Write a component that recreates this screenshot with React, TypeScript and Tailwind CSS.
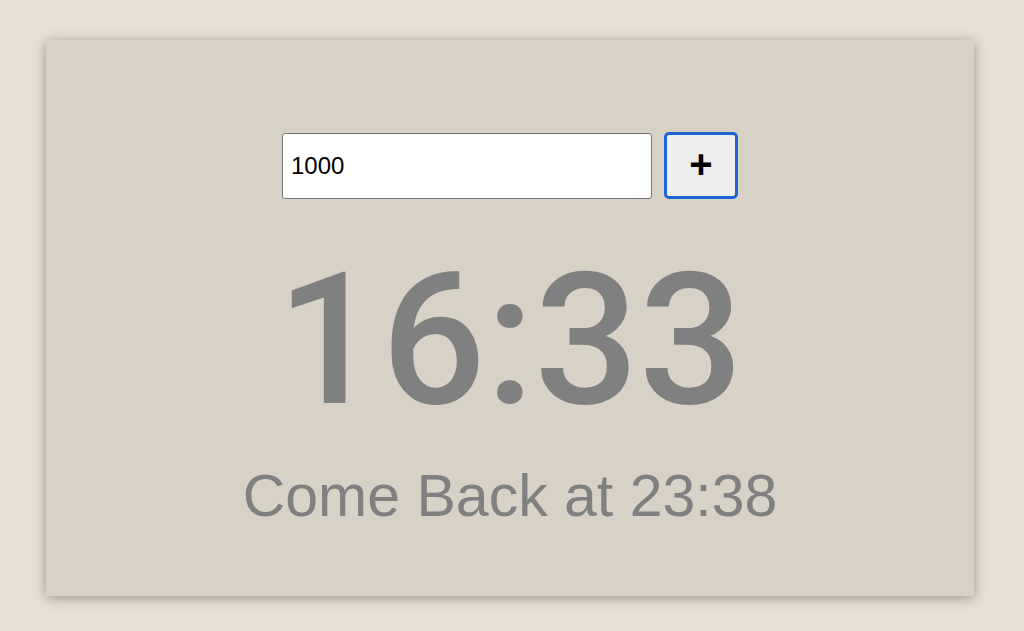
import { useState } from 'react';

export default function App() {
  const [minutes, setMinutes] = useState('1000');

  return (
    <div
      className="w-full h-[631px] bg-[#e8e0d4] pt-[40px] overflow-hidden"
      style={{ fontFamily: '"Liberation Sans", Arial, sans-serif' }}
    >
      <div className="ml-[46px] w-[928px] h-[556px] bg-[#d8d2c6] shadow-[0_2px_12px_rgba(0,0,0,0.35)] flex flex-col items-center pt-[92px]">
        {/* Input row */}
        <div className="flex items-center gap-[12px]">
          <input
            type="text"
            value={minutes}
            onChange={(e) => setMinutes(e.target.value)}
            className="w-[370px] h-[66px] bg-white border border-[#767676] rounded-[3px] px-[8px] text-[24px] text-black outline-none"
          />
          <button
            type="button"
            className="w-[74px] h-[67px] bg-[#efefef] border-[3px] border-[#1f63d4] rounded-[5px] flex items-center justify-center text-[40px] font-bold leading-none text-black"
          >
            <span className="-mt-[4px]">+</span>
          </button>
        </div>

        {/* Countdown */}
        <div className="mt-[49px] font-['Roboto',sans-serif] font-medium text-[184px] leading-none text-[#808080]">
          16:33
        </div>

        <div className="mt-[35px] text-[59px] leading-none text-[#808080]">
          Come Back at 23:38
        </div>
      </div>
    </div>
  );
}
